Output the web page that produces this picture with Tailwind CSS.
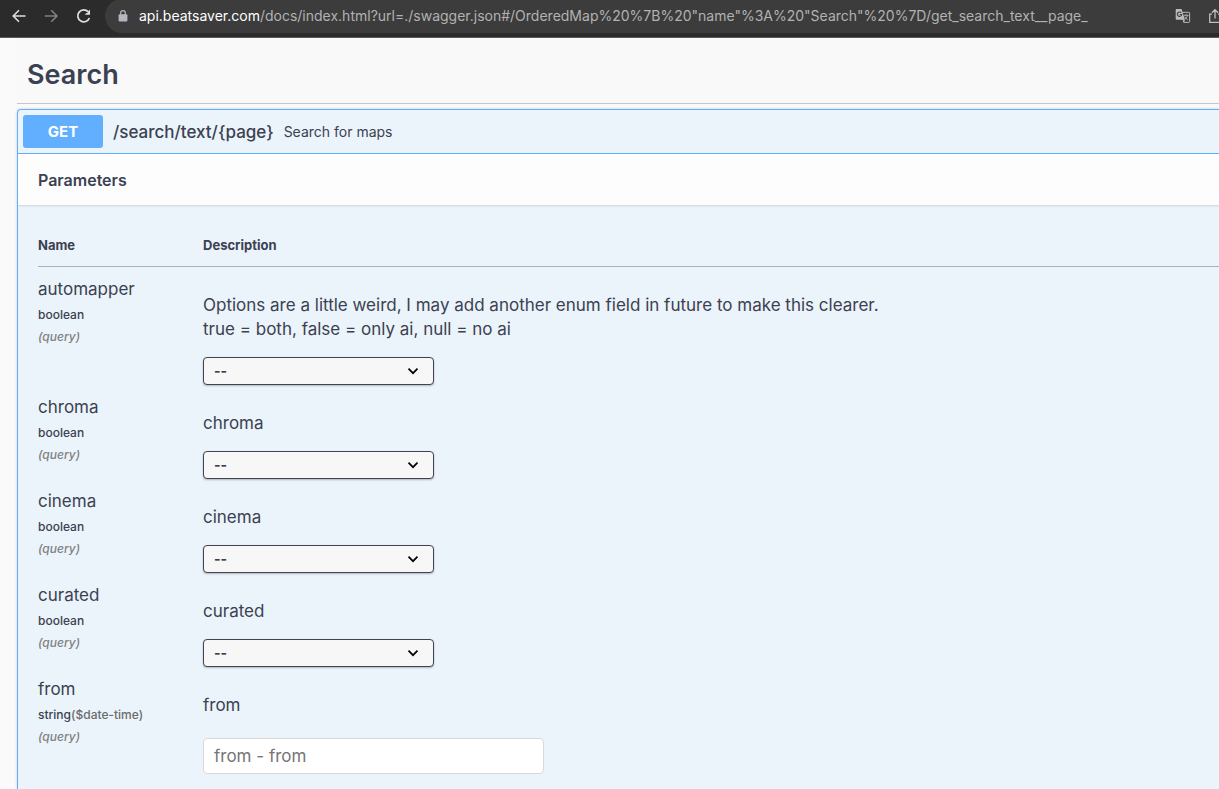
<!DOCTYPE html>
<html lang="en">
<head>
<meta charset="utf-8">
<meta name="viewport" content="width=device-width, initial-scale=1">
<title>BeatSaver API docs</title>
<script src="https://cdn.jsdelivr.net/npm/@tailwindcss/browser@4"></script>
</head>
<body class="h-screen overflow-hidden flex flex-col bg-[#fafafa] font-['Inter','Liberation_Sans',sans-serif] text-[#3b4151]">

<header class="shrink-0 h-[38px] bg-[#2b2b2b] border-b border-[#5a5a5a] flex items-start overflow-hidden">
  <nav class="flex items-center gap-3 h-8 pl-[9px] w-[105px] shrink-0" aria-label="Browser navigation">
    <button aria-label="Back" class="size-5 text-[#dedede]">
      <svg viewBox="0 0 20 20" class="size-5" fill="none" stroke="currentColor" stroke-width="1.6"><path d="M16.5 10H4.5M10 4.2L4.2 10l5.8 5.8"/></svg>
    </button>
    <button aria-label="Forward" class="size-5 text-[#808080]">
      <svg viewBox="0 0 20 20" class="size-5" fill="none" stroke="currentColor" stroke-width="1.6"><path d="M3.8 10h12M10.2 4.2L16 10l-5.8 5.8"/></svg>
    </button>
    <button aria-label="Reload" class="size-5 text-[#dedede]">
      <svg viewBox="0 0 20 20" class="size-5" fill="none" stroke="currentColor" stroke-width="1.7"><path d="M16.4 12a6 6 0 1 1-1.200-6.200L16.600 7.400"/><path d="M17 3.600v5.200h-5.200l1.700-1.700h1.800V5.300z" fill="currentColor" stroke="none"/></svg>
    </button>
  </nav>
  <div class="flex-1 min-w-0 h-[34px] -mt-px -mr-2 pl-3 rounded-l-full bg-[#3c3c3c] flex items-center">
    <svg viewBox="0 0 12 14" class="w-3 h-[14px] shrink-0" aria-hidden="true"><rect x="1.6" y="5.2" width="8.8" height="7.4" rx="1.1" fill="#b4b8be"/><path d="M3.7 6V3.9a2.3 2.3 0 0 1 4.6 0V6" fill="none" stroke="#b4b8be" stroke-width="1.2"/></svg>
    <p class="ml-[10px] text-sm leading-5 whitespace-nowrap text-[#b2b2b2]"><span class="text-white">api.beatsaver.com</span>/docs/index.html?url=./swagger.json#/OrderedMap%20%7B%20"name"%3A%20"Search"%20%7D/get_search_text__page_</p>
    <div class="ml-auto flex items-center gap-4 pr-1 shrink-0">
      <button aria-label="Translate this page" class="size-4">
        <svg viewBox="0 0 16 16" class="size-4"><path d="M6.5 4.3h7.3q.8 0 .8.8v8.5q0 .8-.8.8H8.8L6.5 4.3" fill="none" stroke="#b8b8b8"/><path d="M1.7.9h4.8l3.4 10.9H1.7Q.7 11.8.7 10.8V1.900Q.7.9 1.700.9z" fill="#bdbdbd"/><path d="M6.300 4.900A2.200 2.200 0 1 0 6.700 6.500H4.800" fill="none" stroke="#3c3c3c" stroke-width="1.100"/><path d="M8.800 7.300h4.800M11.200 6.200v1.100M12.600 7.400q-.6 2.300-2.600 3.700M9.800 8.700q1 2 2.900 3M8.300 14.200l1.500-2.400" fill="none" stroke="#b8b8b8" stroke-width=".9"/></svg>
      </button>
      <button aria-label="Share" class="size-4">
        <svg viewBox="0 0 16 16" class="size-4" fill="none" stroke="#bdbdbd" stroke-width="1.300"><path d="M5 6.200H2.700v8.100h10.600V6.200H11M8 10.500V1.800M4.900 4.700L8 1.600l3.100 3.100"/></svg>
      </button>
    </div>
  </div>
</header>

<main class="flex-1 min-h-0 flex flex-col pl-[17px] -mr-4 overflow-hidden">
  <div class="shrink-0 h-[66px] mb-[5px] px-[10px] pt-2 flex items-center border-b border-[#c4c6ca] bg-[#f9f9f9]">
    <h1 class="text-[27px] leading-8 font-semibold">Search</h1>
  </div>

  <section class="flex-1 min-h-0 overflow-hidden rounded-t border border-b-0 border-[#61affe] bg-[#ebf3fb] shadow-[0_0_3px_rgba(0,0,0,0.19)]">
    <button class="w-full h-11 px-[5px] flex items-center text-left border-b border-[#61affe]">
      <span class="w-20 h-[33px] rounded-[3px] bg-[#61affe] text-white text-[15px] leading-[33px] font-bold text-center">GET</span>
      <span class="pl-[10px] text-[17px] leading-6 font-medium">/search/text/{page}</span>
      <span class="pl-[10px] text-sm leading-6">Search for maps</span>
    </button>
    <div class="h-[51px] px-5 flex items-center bg-[#fdfdfe] shadow-[0_1px_2px_rgba(0,0,0,0.12)]">
      <h2 class="text-base leading-6 font-semibold">Parameters</h2>
    </div>

    <div class="pl-5 pt-[27px]">
      <table class="w-full table-fixed border-collapse">
        <thead>
          <tr class="h-[34px] border-b border-[#a9b1bd] text-[13px] leading-5 font-semibold text-left align-top">
            <th class="w-[165px] pt-[3px]">Name</th>
            <th class="pt-[3px]">Description</th>
          </tr>
        </thead>
        <tbody class="align-top">
          <tr>
            <td class="pt-[10px]">
              <div class="text-[17px] leading-6">automapper</div>
              <div class="mt-1 text-xs leading-5 font-medium">boolean</div>
              <div class="mt-[2px] text-xs leading-5 font-medium italic text-[#808080]">(query)</div>
            </td>
            <td class="pt-[26px]">
              <p class="text-[17px] leading-6">Options are a little weird, I may add another enum field in future to make this clearer.<br>true = both, false = only ai, null = no ai</p>
              <div class="mt-4 relative w-[231px]">
                <select aria-label="automapper" class="block w-full h-7 pl-[10px] appearance-none rounded border border-[#41444e] bg-[#f7f7f7] shadow-[0_1px_2px_rgba(0,0,0,0.25)] text-sm font-bold"><option>--</option></select>
                <svg viewBox="0 0 12 12" class="absolute right-[15px] top-2 size-3 pointer-events-none" fill="none" stroke="#000" stroke-width="1.700"><path d="M1.500 3.700L6 8.200l4.500-4.500"/></svg>
              </div>
            </td>
          </tr>
          <tr>
            <td class="pt-[10px]">
              <div class="text-[17px] leading-6">chroma</div>
              <div class="mt-1 text-xs leading-5 font-medium">boolean</div>
              <div class="mt-[2px] text-xs leading-5 font-medium italic text-[#808080]">(query)</div>
            </td>
            <td class="pt-[26px]">
              <p class="text-[17px] leading-6">chroma</p>
              <div class="mt-4 relative w-[231px]">
                <select aria-label="chroma" class="block w-full h-7 pl-[10px] appearance-none rounded border border-[#41444e] bg-[#f7f7f7] shadow-[0_1px_2px_rgba(0,0,0,0.25)] text-sm font-bold"><option>--</option></select>
                <svg viewBox="0 0 12 12" class="absolute right-[15px] top-2 size-3 pointer-events-none" fill="none" stroke="#000" stroke-width="1.700"><path d="M1.500 3.700L6 8.200l4.500-4.500"/></svg>
              </div>
            </td>
          </tr>
          <tr>
            <td class="pt-[10px]">
              <div class="text-[17px] leading-6">cinema</div>
              <div class="mt-1 text-xs leading-5 font-medium">boolean</div>
              <div class="mt-[2px] text-xs leading-5 font-medium italic text-[#808080]">(query)</div>
            </td>
            <td class="pt-[26px]">
              <p class="text-[17px] leading-6">cinema</p>
              <div class="mt-4 relative w-[231px]">
                <select aria-label="cinema" class="block w-full h-7 pl-[10px] appearance-none rounded border border-[#41444e] bg-[#f7f7f7] shadow-[0_1px_2px_rgba(0,0,0,0.25)] text-sm font-bold"><option>--</option></select>
                <svg viewBox="0 0 12 12" class="absolute right-[15px] top-2 size-3 pointer-events-none" fill="none" stroke="#000" stroke-width="1.700"><path d="M1.500 3.700L6 8.200l4.500-4.500"/></svg>
              </div>
            </td>
          </tr>
          <tr>
            <td class="pt-[10px]">
              <div class="text-[17px] leading-6">curated</div>
              <div class="mt-1 text-xs leading-5 font-medium">boolean</div>
              <div class="mt-[2px] text-xs leading-5 font-medium italic text-[#808080]">(query)</div>
            </td>
            <td class="pt-[26px]">
              <p class="text-[17px] leading-6">curated</p>
              <div class="mt-4 relative w-[231px]">
                <select aria-label="curated" class="block w-full h-7 pl-[10px] appearance-none rounded border border-[#41444e] bg-[#f7f7f7] shadow-[0_1px_2px_rgba(0,0,0,0.25)] text-sm font-bold"><option>--</option></select>
                <svg viewBox="0 0 12 12" class="absolute right-[15px] top-2 size-3 pointer-events-none" fill="none" stroke="#000" stroke-width="1.700"><path d="M1.500 3.700L6 8.200l4.500-4.500"/></svg>
              </div>
            </td>
          </tr>
          <tr>
            <td class="pt-[10px]">
              <div class="text-[17px] leading-6">from</div>
              <div class="mt-1 text-xs leading-5 font-medium">string<span class="text-[#6b6b6b]">($date-time)</span></div>
              <div class="mt-[2px] text-xs leading-5 font-medium italic text-[#808080]">(query)</div>
            </td>
            <td class="pt-[26px]">
              <p class="text-[17px] leading-6">from</p>
              <input type="text" aria-label="from" placeholder="from - from" class="block mt-[21px] w-[341px] h-9 px-[10px] rounded border border-[#d9d9d9] bg-white text-[17px] placeholder:text-[#757575]">
            </td>
          </tr>
        </tbody>
      </table>
    </div>
  </section>
</main>
</body>
</html>
